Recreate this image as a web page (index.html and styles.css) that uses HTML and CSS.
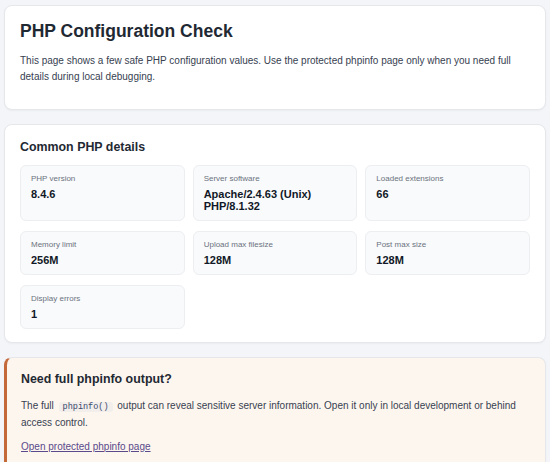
FILE: index.html
```html
<!DOCTYPE html>
<html lang="en">
<head>
  <meta charset="UTF-8">
  <title>PHP Configuration Check</title>
  <link rel="stylesheet" href="styles.css">
</head>
<body>

  <div class="card intro">
    <h1>PHP Configuration Check</h1>
    <p>This page shows a few safe PHP configuration values. Use the protected phpinfo page only when you need full details during local debugging.</p>
  </div>

  <div class="card">
    <h2>Common PHP details</h2>
    <div class="grid">
      <div class="item">
        <div class="label">PHP version</div>
        <div class="value">8.4.6</div>
      </div>
      <div class="item">
        <div class="label">Server software</div>
        <div class="value">Apache/2.4.63 (Unix) PHP/8.1.32</div>
      </div>
      <div class="item">
        <div class="label">Loaded extensions</div>
        <div class="value">66</div>
      </div>
      <div class="item">
        <div class="label">Memory limit</div>
        <div class="value">256M</div>
      </div>
      <div class="item">
        <div class="label">Upload max filesize</div>
        <div class="value">128M</div>
      </div>
      <div class="item">
        <div class="label">Post max size</div>
        <div class="value">128M</div>
      </div>
      <div class="item">
        <div class="label">Display errors</div>
        <div class="value">1</div>
      </div>
    </div>
  </div>

  <div class="card warning">
    <h2>Need full phpinfo output?</h2>
    <p>The full <code>phpinfo()</code> output can reveal sensitive server information. Open it only in local development or behind access control.</p>
    <p><a href="phpinfo.php">Open protected phpinfo page</a></p>
  </div>

</body>
</html>
```

FILE: styles.css
```css
body {
  font-family: "Liberation Sans", Arial, sans-serif;
  margin: 0;
  padding: 5px 4px;
  background: #f3f5f8;
  color: #1f2937;
  font-size: 10px;
  line-height: 16px;
}
.card {
  background: #fff;
  border: 1px solid #e5e7eb;
  border-radius: 8px;
  box-shadow: 0 1px 2px rgba(0, 0, 0, 0.04);
  padding: 14px 15px 13px;
  margin-bottom: 14px;
}
.intro {
  padding-top: 16px;
  padding-bottom: 24px;
}
h1 {
  font-size: 17.5px;
  line-height: 18px;
  margin: 0 0 13px;
  color: #1f2933;
}
h2 {
  font-size: 12.4px;
  line-height: 16px;
  margin: 0 0 10px;
  color: #1f2933;
}
p {
  margin: 0 0 8px;
  color: #374151;
}
p:last-child {
  margin-bottom: 0;
}
.grid {
  display: grid;
  grid-template-columns: repeat(3, 1fr);
  column-gap: 8px;
  row-gap: 10px;
}
.item {
  background: #f9fafb;
  border: 1px solid #eceef1;
  border-radius: 6px;
  padding: 7px 10px 8px;
}
.label {
  color: #6b7280;
  font-size: 8px;
  line-height: 12px;
  margin-bottom: 3px;
}
.value {
  font-weight: bold;
  font-size: 11px;
  line-height: 12px;
  color: #111827;
}
.warning {
  background: #fdf6ee;
  border-left: 3px solid #c4693a;
  padding: 13px 15px 14px 14px;
  margin-bottom: 0;
}
.warning h2 {
  margin-bottom: 11px;
}
code {
  font-family: "Liberation Mono", monospace;
  font-size: 8.5px;
  background: #f1eeec;
  color: #3d4a6b;
  padding: 0 4px;
  margin: 0 2px;
  border-radius: 3px;
}
a {
  color: #5a4a8c;
}
```
